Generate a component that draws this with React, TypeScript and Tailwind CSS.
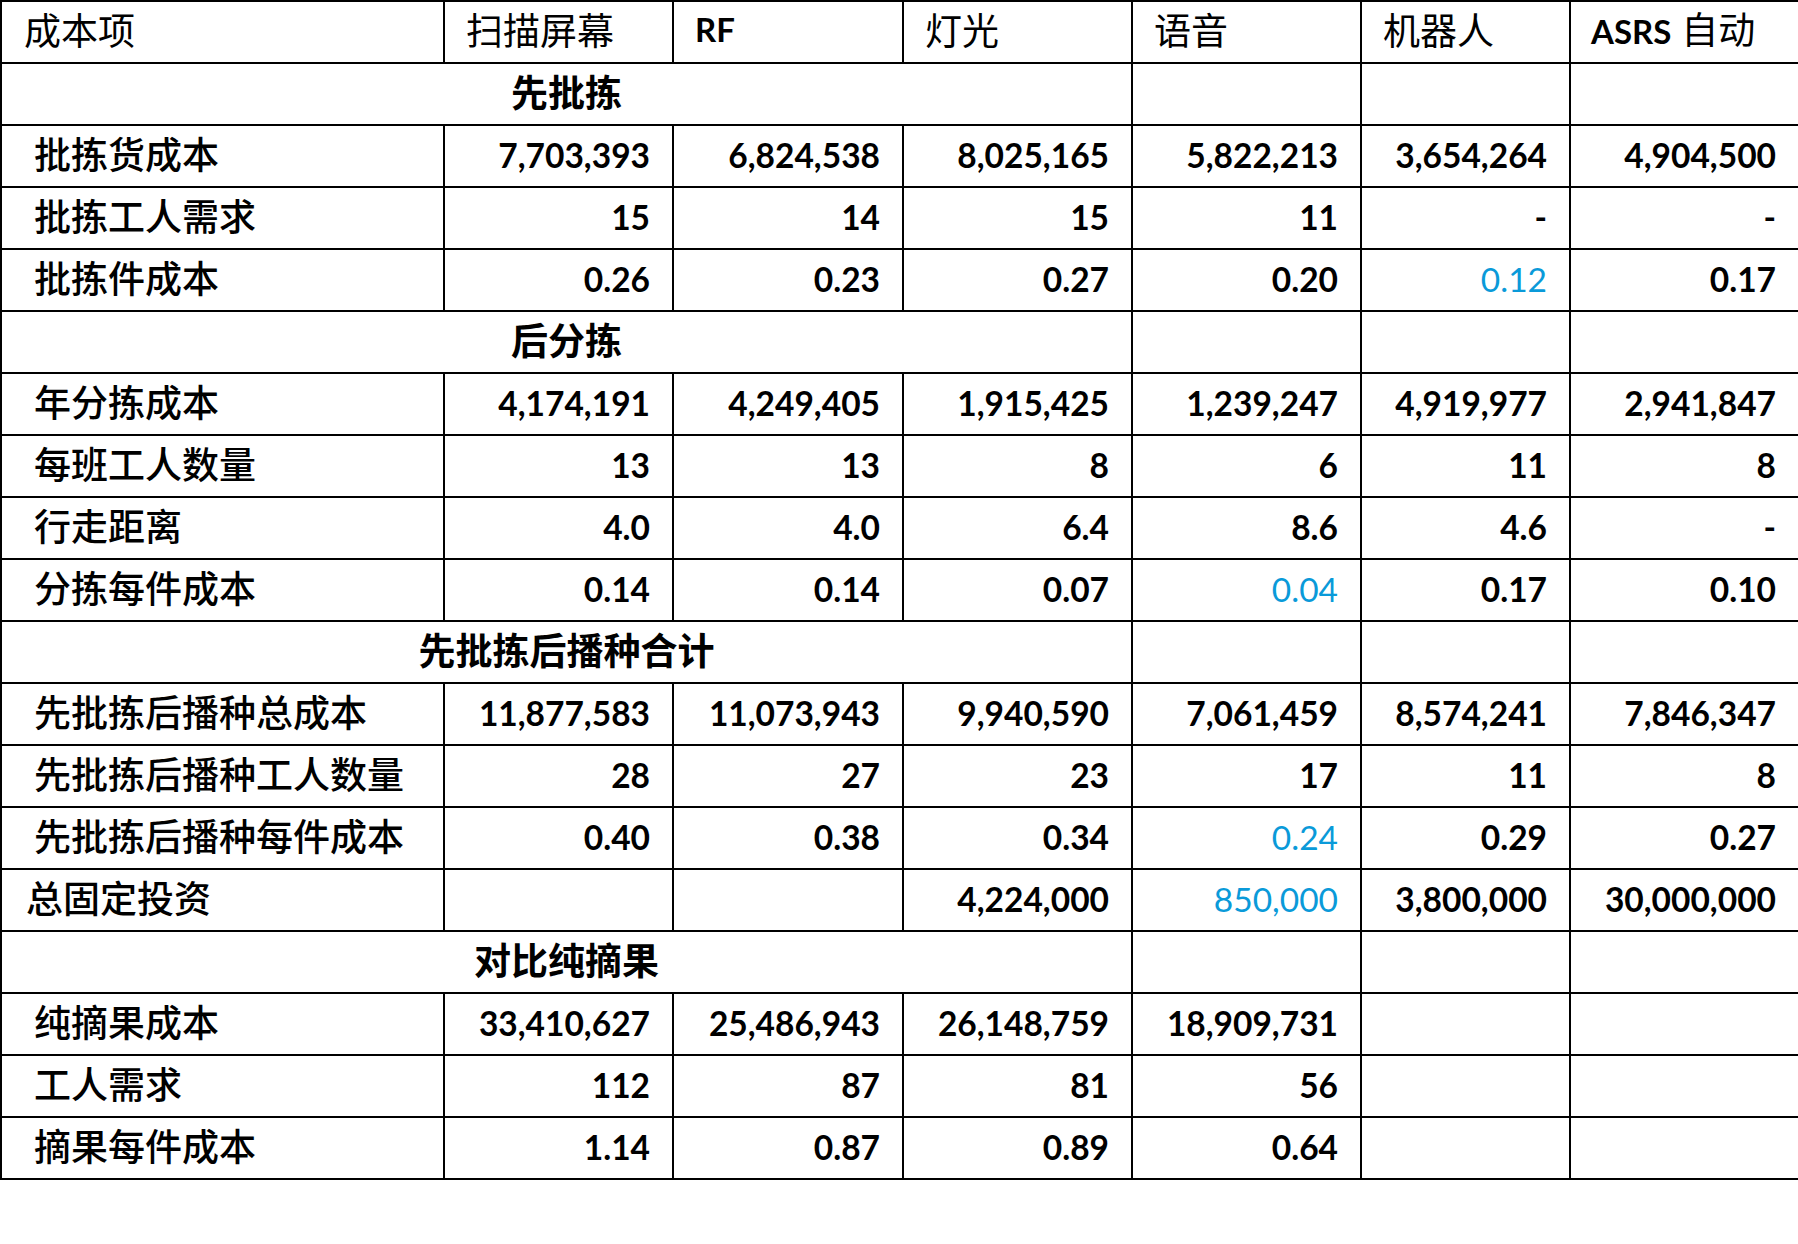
import React from 'react'

type Cell = string | { v: string; blue?: boolean }

type Row =
  | { kind: 'section'; title: string }
  | { kind: 'data'; label: string; cells: Cell[]; indent?: 'tight' }

const rows: Row[] = [
  { kind: 'section', title: '先批拣' },
  { kind: 'data', label: '批拣货成本', cells: ['7,703,393', '6,824,538', '8,025,165', '5,822,213', '3,654,264', '4,904,500'] },
  { kind: 'data', label: '批拣工人需求', cells: ['15', '14', '15', '11', '-', '-'] },
  { kind: 'data', label: '批拣件成本', cells: ['0.26', '0.23', '0.27', '0.20', { v: '0.12', blue: true }, '0.17'] },
  { kind: 'section', title: '后分拣' },
  { kind: 'data', label: '年分拣成本', cells: ['4,174,191', '4,249,405', '1,915,425', '1,239,247', '4,919,977', '2,941,847'] },
  { kind: 'data', label: '每班工人数量', cells: ['13', '13', '8', '6', '11', '8'] },
  { kind: 'data', label: '行走距离', cells: ['4.0', '4.0', '6.4', '8.6', '4.6', '-'] },
  { kind: 'data', label: '分拣每件成本', cells: ['0.14', '0.14', '0.07', { v: '0.04', blue: true }, '0.17', '0.10'] },
  { kind: 'section', title: '先批拣后播种合计' },
  { kind: 'data', label: '先批拣后播种总成本', cells: ['11,877,583', '11,073,943', '9,940,590', '7,061,459', '8,574,241', '7,846,347'] },
  { kind: 'data', label: '先批拣后播种工人数量', cells: ['28', '27', '23', '17', '11', '8'] },
  { kind: 'data', label: '先批拣后播种每件成本', cells: ['0.40', '0.38', '0.34', { v: '0.24', blue: true }, '0.29', '0.27'] },
  { kind: 'data', label: '总固定投资', indent: 'tight', cells: ['', '', '4,224,000', { v: '850,000', blue: true }, '3,800,000', '30,000,000'] },
  { kind: 'section', title: '对比纯摘果' },
  { kind: 'data', label: '纯摘果成本', cells: ['33,410,627', '25,486,943', '26,148,759', '18,909,731', '', ''] },
  { kind: 'data', label: '工人需求', cells: ['112', '87', '81', '56', '', ''] },
  { kind: 'data', label: '摘果每件成本', cells: ['1.14', '0.87', '0.89', '0.64', '', ''] },
]

const cjk = "font-['Noto_Sans_CJK_SC',sans-serif]"
const num = "font-['Lato','Noto_Sans_CJK_SC',sans-serif]"
const td = 'border-2 border-black p-0 align-middle'

export default function App() {
  return (
    <div className="w-[1798px] h-[1244px] bg-white overflow-hidden">
      <table className="w-[1798px] table-fixed border-collapse text-black">
        <colgroup>
          <col className="w-[443px]" />
          <col className="w-[229px]" />
          <col className="w-[230px]" />
          <col className="w-[229px]" />
          <col className="w-[229px]" />
          <col className="w-[209px]" />
          <col className="w-[229px]" />
        </colgroup>
        <tbody>
          {/* Header */}
          <tr className="h-[62px]">
            <td className={`${td} pb-[6px] pl-[22px] text-[37px] leading-none ${cjk}`}>成本项</td>
            <td className={`${td} pb-[6px] pl-[21px] text-[37px] leading-none ${cjk}`}>扫描屏幕</td>
            <td className={`${td} pb-[6px] pl-[21px] text-[33px] font-bold leading-none ${num}`}>RF</td>
            <td className={`${td} pb-[6px] pl-[21px] text-[37px] leading-none ${cjk}`}>灯光</td>
            <td className={`${td} pb-[6px] pl-[21px] text-[37px] leading-none ${cjk}`}>语音</td>
            <td className={`${td} pb-[6px] pl-[21px] text-[37px] leading-none ${cjk}`}>机器人</td>
            <td className={`${td} pb-[6px] pl-[20px] leading-none whitespace-nowrap`}>
              <span className={`text-[33px] font-bold ${num}`}>ASRS</span>
              <span className={`text-[37px] ml-[10px] ${cjk}`}>自动</span>
            </td>
          </tr>

          {rows.map((row, i) =>
            row.kind === 'section' ? (
              <tr key={i} className="h-[62px]">
                <td colSpan={4} className={`${td} pb-[6px] text-center text-[37px] font-bold leading-none ${cjk}`}>
                  {row.title}
                </td>
                <td className={td} />
                <td className={td} />
                <td className={td} />
              </tr>
            ) : (
              <tr key={i} className="h-[62px]">
                <td
                  className={`${td} pb-[5px] ${row.indent === 'tight' ? 'pl-[24px]' : 'pl-[32px]'} text-[37px] font-medium leading-none whitespace-nowrap ${cjk}`}
                >
                  {row.label}
                </td>
                {row.cells.map((c, j) => {
                  const v = typeof c === 'string' ? c : c.v
                  const blue = typeof c !== 'string' && c.blue
                  return (
                    <td
                      key={j}
                      className={`${td} pb-[1px] pr-[22px] text-right text-[33.5px] leading-none ${num} ${
                        blue ? 'text-[#0a9ad9] font-normal' : 'font-bold'
                      }`}
                    >
                      {v}
                    </td>
                  )
                })}
              </tr>
            )
          )}
        </tbody>
      </table>
    </div>
  )
}
